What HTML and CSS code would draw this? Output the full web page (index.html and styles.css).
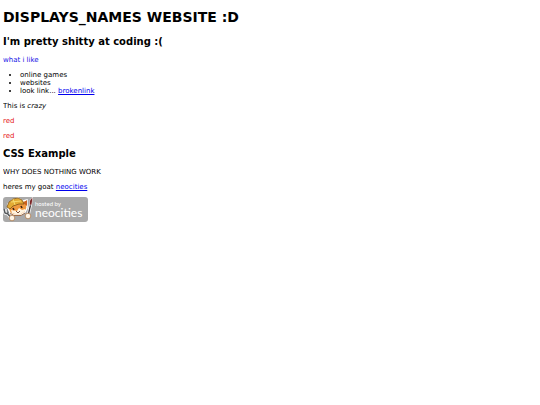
FILE: index.html
```html
<!DOCTYPE html>
<html lang="en">
<head>
  <meta charset="UTF-8">
  <meta name="viewport" content="width=device-width, initial-scale=1.0">
  <title>DISPLAYS_NAMES WEBSITE :D</title>
  <link rel="stylesheet" href="styles.css">
</head>
<body>
  <h1>DISPLAYS_NAMES WEBSITE :D</h1>
  <h2>I'm pretty shitty at coding :(</h2>

  <p class="blue">what i like</p>
  <ul>
    <li>online games</li>
    <li>websites</li>
    <li>look link... <a href="#">brokenlink</a></li>
  </ul>

  <p>This is <em>crazy</em></p>
  <p class="red">red</p>
  <p class="red">red</p>

  <h2>CSS Example</h2>
  <p>WHY DOES NOTHING WORK</p>
  <p>heres my goat <a href="https://neocities.org">neocities</a></p>

  <a class="badge" href="https://neocities.org" aria-label="hosted by neocities">
    <svg width="85" height="25" viewBox="0 0 85 25">
      <rect width="85" height="25" rx="3" fill="#a9a9a9"/>
      <!-- paintbrush -->
      <path d="M27.5 8 25 19" stroke="#fff" stroke-width="3"/>
      <path d="M27.5 8 25 19" stroke="#433c40" stroke-width="1.4"/>
      <path d="M26.5 8 26.5 4 29.5 0 29.5 4 28.5 8Z" fill="#7b2526" stroke="#fff" stroke-width=".5"/>
      <!-- wrench -->
      <path d="M1 12 2 16 5 17 8 21M5 12 5 16" fill="none" stroke="#fff" stroke-width="3"/>
      <path d="M1 12 2 16 5 17 8 21M5 12 5 16" fill="none" stroke="#53575a" stroke-width="1.5"/>
      <!-- cat -->
      <path d="M5 7 5 11 7 16 11 18 18 18 22 15 24 11 24 3 20 4 15 1 9 3Z" fill="#ef983f" stroke="#fff" stroke-width="1.4"/>
      <path d="M8 13 9 16 12 17 18 17 22 14 22 12 19 13 16 11 14 14Z" fill="#fff4df"/>
      <path d="M20 6 24 3 24 9Z" fill="#c9601f"/>
      <path d="M4 10 6 5 10 2 15 1 19 3 21 7 16 7 10 9 7 12Z" fill="#e3ab35" stroke="#805417" stroke-width=".8"/>
      <path d="M8 5 18 4M10 2 12 8" stroke="#fae47c" stroke-width=".8"/>
      <path d="M10 11 11 13M18 9 19 11" stroke="#3a2417" stroke-width="1.6"/>
      <path d="M13 14 15 16 17 14" fill="none" stroke="#70412a" stroke-width=".9"/>
      <path d="M7 16 11 18.5 18 18.5 22 16" fill="none" stroke="#8a4e22" stroke-width=".8"/>
      <!-- paws -->
      <circle cx="9" cy="21" r="2.8" fill="#fff5e6" stroke="#a87342" stroke-width=".7"/>
      <circle cx="25" cy="19" r="2.8" fill="#fff5e6" stroke="#a87342" stroke-width=".7"/>
      <text class="hosted" x="32" y="9">hosted by</text>
      <text class="name" x="32" y="20">neocities</text>
    </svg>
  </a>
</body>
</html>
```

FILE: styles.css
```css
body {
  margin: 0 3px;
  background-color: white;
  color: black;
  font-family: Verdana, "DejaVu Sans", sans-serif;
  font-size: 7px;
  line-height: 8px;
}

h1 {
  margin: 9px 0 11px;
  font-size: 14px;
  line-height: 16px;
}

h2 {
  margin: 8px 0;
  font-size: 10px;
  line-height: 12px;
}

p, ul {
  margin: 7px 0;
}

ul {
  padding-left: 17px;
}

a {
  color: #0000ee;
}

.blue {
  color: #1414e6;
}

.red {
  color: #e61919;
}

.badge {
  display: block;
  width: fit-content;
  margin-top: 6px;
}

p:last-of-type {
  margin-bottom: 6px;
}

.badge svg {
  display: block;
}

.badge text {
  fill: white;
  font-family: Lato, "Open Sans", sans-serif;
}

.hosted {
  font-size: 6px;
}

.name {
  font-size: 12px;
}
```
